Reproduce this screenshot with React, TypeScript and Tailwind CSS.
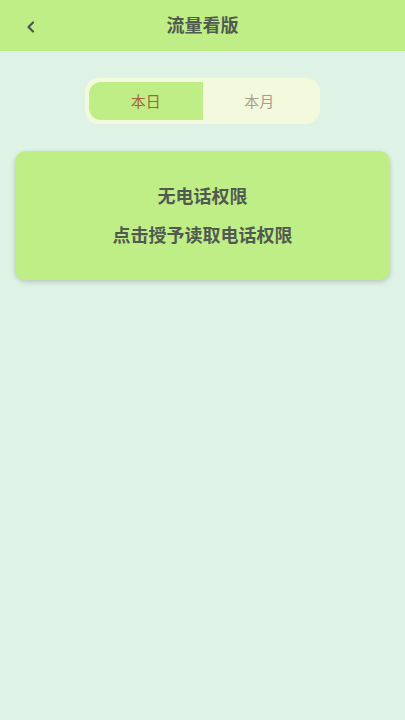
import { useState } from "react";

export default function App() {
    const [tab, setTab] = useState<"day" | "month">("day");

    return (
        <div
            className="min-h-[720px] w-full bg-[#dff2e6] flex flex-col"
            style={{ fontFamily: '"Noto Sans", "Noto Sans CJK SC", sans-serif' }}
        >
            <div className="h-[51px] bg-[#c0ee86] flex items-center relative">
                <button className="absolute left-[19px] top-[15px] w-6 h-6 flex items-center justify-center">
                    <svg width="10" height="12" viewBox="0 0 10 12" fill="none">
                        <path d="M7 1.5L2.5 6L7 10.5" stroke="#4b554b" strokeWidth="2.2" strokeLinecap="round" strokeLinejoin="round" />
                    </svg>
                </button>
                <h1 className="flex-1 text-center text-[18px] font-semibold text-[#505a50]">流量看版</h1>
            </div>

            <div className="flex justify-center mt-[27px]">
                <div className="w-[235px] h-[46px] bg-[#f3f9dc] rounded-[14px] p-[4px] flex">
                    <button
                        onClick={() => setTab("day")}
                        className={`flex-1 rounded-l-[12px] text-[15px] ${tab === "day" ? "bg-[#c0ee86] text-[#a4643a]" : "text-[#ab9d8c]"}`}
                    >
                        本日
                    </button>
                    <button
                        onClick={() => setTab("month")}
                        className={`flex-1 rounded-r-[12px] text-[15px] ${tab === "month" ? "bg-[#c0ee86] text-[#a4643a]" : "text-[#ab9d8c]"}`}
                    >
                        本月
                    </button>
                </div>
            </div>

            <div className="mx-[15px] mt-[27px] h-[129px] bg-[#c0ee86] rounded-[11px] shadow-[0_2px_5px_rgba(0,0,0,0.18)] flex flex-col items-center justify-center gap-[17px]">
                <p className="text-[18px] font-semibold text-[#505a50] leading-[22px]">无电话权限</p>
                <p className="text-[18px] font-semibold text-[#505a50] leading-[22px]">点击授予读取电话权限</p>
            </div>
        </div>
    );
}
